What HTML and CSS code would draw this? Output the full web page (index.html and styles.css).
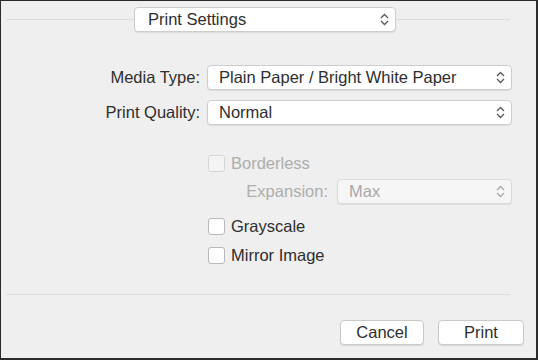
FILE: index.html
```html
<!DOCTYPE html>
<html lang="en">
<head>
    <meta charset="UTF-8">
    <meta name="viewport" content="width=device-width, initial-scale=1.0">
    <title>Print</title>
    <link rel="stylesheet" href="styles.css">
</head>
<body>
    <div class="window">
        <div class="header">
            <span class="rule rule-left"></span>
            <div class="popup popup-header">
                <span>Print Settings</span>
                <svg class="chevron" width="9" height="13" viewBox="0 0 9 13"><path d="M1 5L4.5 1.5L8 5M1 8L4.5 11.5L8 8"/></svg>
            </div>
            <span class="rule"></span>
        </div>

        <div class="fields">
            <label class="field-label">Media Type:</label>
            <div class="popup">
                <span>Plain Paper / Bright White Paper</span>
                <svg class="chevron" width="9" height="13" viewBox="0 0 9 13"><path d="M1 5L4.5 1.5L8 5M1 8L4.5 11.5L8 8"/></svg>
            </div>
            <label class="field-label">Print Quality:</label>
            <div class="popup">
                <span>Normal</span>
                <svg class="chevron" width="9" height="13" viewBox="0 0 9 13"><path d="M1 5L4.5 1.5L8 5M1 8L4.5 11.5L8 8"/></svg>
            </div>
        </div>

        <div class="options">
            <div class="check-row disabled">
                <span class="box"></span>
                <span>Borderless</span>
            </div>
            <div class="expansion disabled">
                <span class="field-label">Expansion:</span>
                <div class="popup popup-small">
                    <span>Max</span>
                    <svg class="chevron" width="9" height="13" viewBox="0 0 9 13"><path d="M1 5L4.5 1.5L8 5M1 8L4.5 11.5L8 8"/></svg>
                </div>
            </div>
            <div class="check-row row-gray">
                <span class="box"></span>
                <span>Grayscale</span>
            </div>
            <div class="check-row row-mirror">
                <span class="box"></span>
                <span>Mirror Image</span>
            </div>
        </div>

        <div class="rule rule-bottom"></div>

        <div class="buttons">
            <button class="btn btn-cancel">Cancel</button>
            <button class="btn btn-print">Print</button>
        </div>
    </div>
</body>
</html>
```

FILE: styles.css
```css
/* Mac print dialog, details pane */
body {
    margin: 0;
    font-family: 'Liberation Sans', Arial, sans-serif;
    font-size: 16.5px;
    color: #2e2e2e;
}
.window {
    box-sizing: border-box;
    width: 538px;
    height: 360px;
    background-color: #efefef;
    border-style: solid;
    border-color: #2b2b2b;
    border-width: 1px 2px 2px 1px;
    display: flex;
    flex-direction: column;
}
.rule {
    flex: 1;
    height: 1px;
    background-color: #dcdcdc;
}
.header {
    display: flex;
    align-items: center;
    margin: 6px 26px 0 5px;
}
.rule-left {
    flex: 0 0 128px;
}
.popup {
    box-sizing: border-box;
    height: 25px;
    display: flex;
    align-items: center;
    justify-content: space-between;
    padding: 0 6px 0 11px;
    background-color: #fff;
    border: 1px solid #cdcdcd;
    border-radius: 4px;
    box-shadow: 0 1px 1px rgba(0, 0, 0, 0.08);
}
.popup-header {
    width: 262px;
    padding-left: 13px;
}
.chevron path {
    fill: none;
    stroke: #5a5a5a;
    stroke-width: 1.3;
}
.fields {
    display: grid;
    grid-template-columns: 199px 305px;
    column-gap: 7px;
    row-gap: 10px;
    align-items: center;
    margin-top: 33px;
}
.field-label {
    text-align: right;
}
.options {
    display: flex;
    flex-direction: column;
    width: 304px;
    padding-left: 207px;
    margin-top: 28px;
}
.check-row {
    height: 20px;
    display: flex;
    align-items: center;
    gap: 6px;
}
.box {
    box-sizing: border-box;
    width: 17px;
    height: 17px;
    background-color: #fff;
    border: 1px solid #b8b8b8;
    border-radius: 3px;
}
.disabled {
    color: #adadad;
}
.disabled .box {
    background-color: #f4f4f4;
    border-color: #d6d6d6;
}
.disabled .popup {
    background-color: #f6f6f6;
    border-color: #dadada;
    color: #a8a8a8;
}
.disabled .chevron path {
    stroke: #a8a8a8;
}
.expansion {
    display: flex;
    align-items: center;
    justify-content: flex-end;
    gap: 9px;
    margin-top: 6px;
}
.popup-small {
    width: 175px;
}
.row-gray {
    margin-top: 12px;
}
.row-mirror {
    margin-top: 9px;
}
.rule-bottom {
    flex: 0 0 1px;
    margin: 29px 26px 0 5px;
}
.buttons {
    display: flex;
    justify-content: flex-end;
    gap: 14px;
    margin-top: 25px;
    padding-right: 12px;
}
.btn {
    box-sizing: border-box;
    height: 25px;
    padding: 0;
    font-family: inherit;
    font-size: 16.5px;
    color: #2e2e2e;
    background-color: #fff;
    border: 1px solid #c9c9c9;
    border-radius: 4px;
    box-shadow: 0 1px 1px rgba(0, 0, 0, 0.1);
}
.btn-cancel {
    width: 84px;
}
.btn-print {
    width: 86px;
}
```
